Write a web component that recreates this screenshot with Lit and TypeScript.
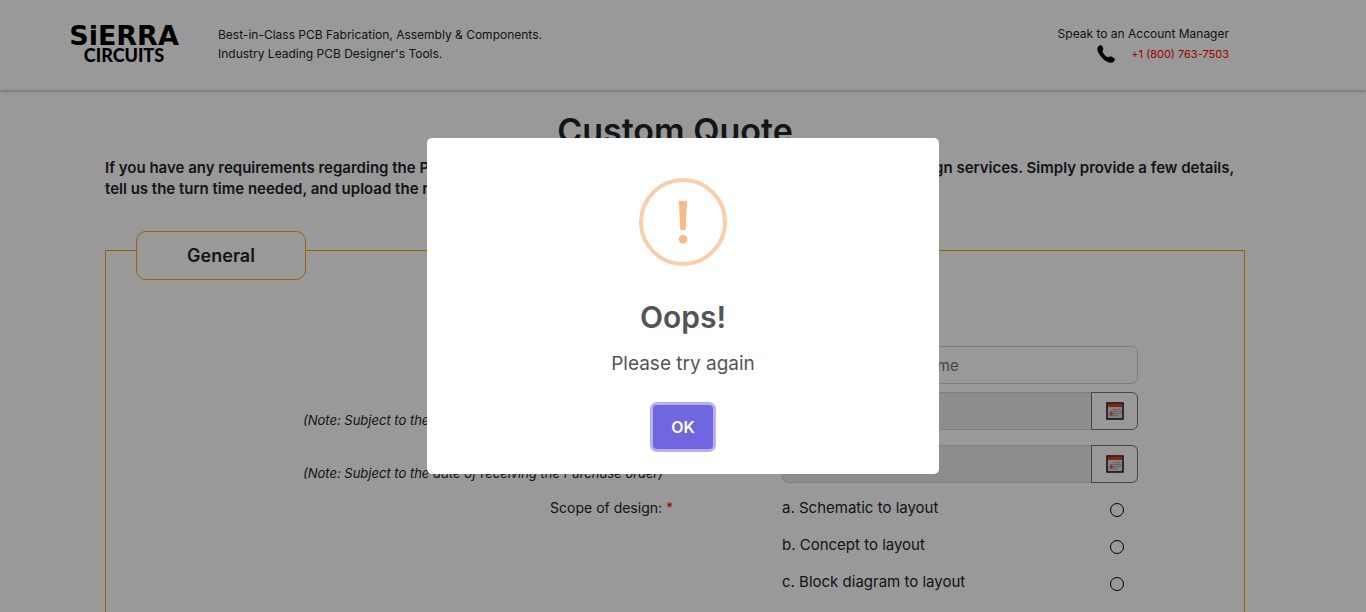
import { LitElement, html, css } from "lit";
import { customElement, state } from "lit/decorators.js";

const calendar = html`<svg class="cal" viewBox="0 0 18 18" aria-hidden="true">
  <rect x="1" y="1" width="16" height="16" fill="#dcdcdc" stroke="#000" stroke-width="1.4" />
  <rect x="1.7" y="1.7" width="14.6" height="3.3" fill="#f03a14" />
  <path d="M7 7.6H15 M4 9.6H15 M3.4 11.6H15 M3.4 13.6H12" stroke="#9a9a9a" stroke-width="1.3" stroke-dasharray="1.4 .6" />
  <path d="M3.4 11.8H7.4 M5.4 9.8V13.8" stroke="#f0472a" stroke-width="1.2" />
</svg>`;

@customElement("app-root")
export class AppRoot extends LitElement {
  @state() private open = true;

  private scopes = ["a. Schematic to layout", "b. Concept to layout", "c. Block diagram to layout"];
  private dates = [
    { id: "start", label: "Expected start date:" },
    { id: "delivery", label: "Expected delivery date:" },
  ];

  static styles = css`
    :host {
      display: block;
      height: 100vh;
      overflow: hidden;
      background: #fff;
      color: #212529;
      font-family: Inter, "Open Sans", sans-serif;
      font-size: 14px;
    }
    * { box-sizing: border-box; }
    h1, h2, p { margin: 0; }
    .page { padding-right: 16px; }
    header {
      display: flex;
      align-items: flex-start;
      height: 90px;
      padding: 16px 137px 0 66px;
      box-shadow: 0 1px 3px rgba(0, 0, 0, 0.3);
      font-size: 12px;
    }
    .logo { flex: none; margin-right: 36px; }
    .logo svg { display: block; }
    .tagline { flex: 1; padding-top: 9px; line-height: 19px; }
    .contact { padding-top: 8px; line-height: 20px; text-align: right; }
    .call { display: flex; justify-content: flex-end; align-items: center; gap: 16px; }
    .call a { color: #f00; font-size: 11px; text-decoration: none; }
    main { max-width: 1140px; margin: 0 auto; }
    h1 {
      padding-top: 21px;
      line-height: 40px;
      font-size: 34px;
      font-weight: 600;
      text-align: center;
    }
    .intro { margin-top: 6px; line-height: 21px; font-size: 15px; font-weight: 600; }
    .box { margin-top: 51px; border: 1px solid #ffa500; padding: 0 106px 0 30px; height: 460px; }
    .box h2 {
      width: 170px;
      margin-top: -20px;
      border: 1px solid #ffa500;
      border-radius: 10px;
      background: #fff;
      line-height: 47px;
      font-size: 18px;
      font-weight: 600;
      text-align: center;
    }
    .row { display: grid; grid-template-columns: minmax(0, 1fr) 356px; column-gap: 109px; }
    .name { margin-top: 66px; line-height: 38px; }
    .date { margin-top: 8px; }
    .date + .date { margin-top: 15px; }
    .label { text-align: right; }
    .date .label { line-height: 18px; }
    .note { padding-right: 10px; line-height: 20px; font-size: 13px; font-style: italic; }
    .req { color: #f00; }
    input[type="text"] {
      width: 100%;
      height: 38px;
      padding: 6px 12px;
      border: 1px solid #ced4da;
      border-radius: 6px;
      background: #fff;
      font: 15px Inter, sans-serif;
    }
    input::placeholder { color: #6c757d; opacity: 1; }
    .group { display: flex; }
    .group input[type="text"] { flex: 1; min-width: 0; border-right: 0; border-radius: 6px 0 0 6px; background: #e9ecef; }
    .pick {
      display: grid;
      place-items: center;
      width: 47px;
      height: 38px;
      padding: 0;
      border: 1px solid #6c757d;
      border-radius: 0 6px 6px 0;
      background: #fff;
    }
    .cal { display: block; width: 18px; height: 18px; }
    .scope { margin-top: 7px; line-height: 36px; }
    .option { display: flex; justify-content: space-between; height: 37px; padding-right: 14px; font-size: 15px; }
    input[type="radio"] {
      appearance: none;
      width: 14px;
      height: 14px;
      margin: 13px 0 0;
      border: 1px solid #000;
      border-radius: 50%;
    }
    .overlay {
      position: fixed;
      inset: 0;
      display: grid;
      place-items: center;
      background: rgba(0, 0, 0, 0.4);
    }
    .modal {
      display: flex;
      flex-direction: column;
      align-items: center;
      width: 512px;
      max-width: 90%;
      padding: 40px 20px 25px;
      border-radius: 5px;
      background: #fff;
      color: #545454;
    }
    .warn { display: block; width: 88px; height: 88px; }
    .title { margin-top: 31px; line-height: 40px; font-size: 30px; font-weight: 600; }
    .text { margin-top: 14px; line-height: 26px; font-size: 19px; }
    .ok {
      width: 60px;
      height: 44px;
      margin-top: 28px;
      border: 0;
      border-radius: 4px;
      background: #7066e0;
      box-shadow: 0 0 0 3px rgba(112, 102, 224, 0.5);
      color: #fff;
      font: 600 16px Inter, sans-serif;
    }
  `;

  render() {
    return html`
      <header>
        <div class="logo">
          <svg width="116" height="54" viewBox="0 0 116 54" role="img" aria-label="Sierra Circuits">
            <text x="58" y="29" text-anchor="middle" font-family="DejaVu Sans" font-weight="700" font-size="27" fill="#000">SiERRA</text>
            <text x="58" y="46" text-anchor="middle" font-family="Lato" font-weight="900" font-size="18" fill="#000">CIRCUITS</text>
          </svg>
        </div>
        <div class="tagline">
          <p>Best-in-Class PCB Fabrication, Assembly &amp; Components.</p>
          <p>Industry Leading PCB Designer's Tools.</p>
        </div>
        <div class="contact">
          <p>Speak to an Account Manager</p>
          <div class="call">
            <svg width="18" height="18" viewBox="0 0 18 18" aria-hidden="true">
              <path d="M1 1.8 C2.2.2 4.2-.4 5.1.8 L6.2 3.4 C6.6 4.6 5.6 5.4 5.5 6.3 C5.8 8.4 8.6 11.4 11 12.2 C12.2 12.3 12.8 11.2 13.8 11.3 L17 13 C18.5 14 17.8 15.8 16.3 16.9 C13 19 8.2 16.4 5 12.8 C1.7 9-1 4.8 1 1.8Z" fill="#000" />
            </svg>
            <a href="tel:+18007637503">+1 (800) 763-7503</a>
          </div>
        </div>
      </header>
      <div class="page">
        <main>
          <h1>Custom Quote</h1>
          <p class="intro">
            If you have any requirements regarding the PCB layout, we're here to help you with our complete range of PCB design services. Simply provide a few details,
            tell us the turn time needed, and upload the required files.
          </p>
          <section class="box">
            <h2>General</h2>
            <div class="row name">
              <label class="label" for="name">Project name: <span class="req">*</span></label>
              <input id="name" type="text" placeholder="Enter the Project Name" />
            </div>
            ${this.dates.map(
              (d) => html`<div class="row date">
                <div class="label">
                  <label for=${d.id}>${d.label} <span class="req">*</span></label>
                  <p class="note">(Note: Subject to the date of receiving the Purchase order)</p>
                </div>
                <div class="group">
                  <input id=${d.id} type="text" readonly />
                  <button class="pick" type="button" aria-label="Pick a date">${calendar}</button>
                </div>
              </div>`
            )}
            <div class="row scope">
              <span class="label" id="scope">Scope of design: <span class="req">*</span></span>
              <div role="radiogroup" aria-labelledby="scope">
                ${this.scopes.map(
                  (s, i) => html`<div class="option">
                    <label for="scope-${i}">${s}</label>
                    <input id="scope-${i}" type="radio" name="scope" />
                  </div>`
                )}
              </div>
            </div>
          </section>
        </main>
      </div>
      ${this.open
        ? html`<div class="overlay">
            <div class="modal" role="dialog" aria-modal="true" aria-labelledby="title">
              <svg class="warn" viewBox="0 0 88 88" aria-hidden="true">
                <circle cx="44" cy="44" r="42" fill="none" stroke="#facea8" stroke-width="4" />
                <path d="M39.9 23H48.1L46.6 52H41.4Z" fill="#f8bb86" />
                <circle cx="44" cy="61.3" r="4.3" fill="#f8bb86" />
              </svg>
              <h2 class="title" id="title">Oops!</h2>
              <p class="text">Please try again</p>
              <button class="ok" type="button" @click=${() => (this.open = false)}>OK</button>
            </div>
          </div>`
        : null}
    `;
  }
}
